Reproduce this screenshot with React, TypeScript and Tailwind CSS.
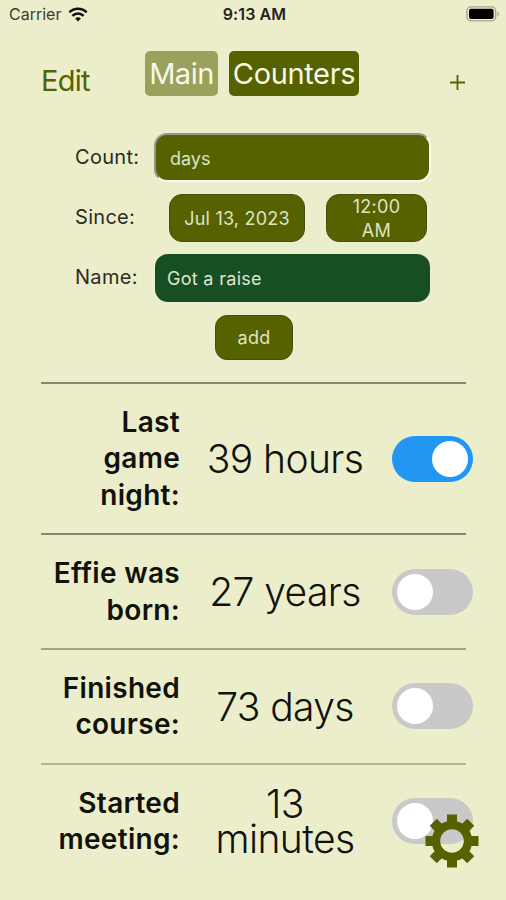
import { useState } from 'react';

interface Counter {
  id: number;
  label: string;
  value: string;
  on: boolean;
  line: string;
}

const COUNTERS: Counter[] = [
  { id: 1, label: 'Last game night:', value: '39 hours', on: true, line: 'border-[#85886a]' },
  { id: 2, label: 'Effie was born:', value: '27 years', on: false, line: 'border-[#85886a]' },
  { id: 3, label: 'Finished course:', value: '73 days', on: false, line: 'border-[#a3a582]' },
  { id: 4, label: 'Started meeting:', value: '13 minutes', on: false, line: 'border-[#b3b58f]' },
];

function StatusBar() {
  return (
    <div className="h-7 grid grid-cols-3 items-center pl-[9px] pr-[6px] text-black">
      <div className="flex items-center gap-[7px]">
        <span className="text-[16px] leading-7 text-[#3c3d35]">Carrier</span>
        <svg width="20" height="15" viewBox="0 0 20 15">
          <path d="M10 14.6 7.1 11.6a4.1 4.1 0 0 1 5.8 0Z" fill="#111" />
          <path d="M4.4 8.9a8 8 0 0 1 11.2 0M1.3 5.4a12.4 12.4 0 0 1 17.4 0" fill="none" stroke="#111" strokeWidth="2.5" />
        </svg>
      </div>
      <span className="text-center text-[16px] leading-7 font-semibold tracking-[0.1px] text-[#22231c]">9:13 AM</span>
      <svg className="justify-self-end" width="34" height="16" viewBox="0 0 34 16">
        <rect x="1" y="0.9" width="28.6" height="14" rx="4" fill="none" stroke="#a6a78f" strokeWidth="1.4" />
        <rect x="3" y="2.8" width="24.6" height="10.2" rx="2" fill="#000" />
        <path d="M31.5 5.4c1.8.6 1.8 4.4 0 5Z" fill="#a6a78f" />
      </svg>
    </div>
  );
}

function Toggle({ on, onChange }: { on: boolean; onChange: () => void }) {
  return (
    <button
      type="button"
      role="switch"
      aria-checked={on}
      onClick={onChange}
      className={`w-[81px] h-[46px] rounded-full px-[5px] flex items-center ${on ? 'bg-[#2196f3] justify-end' : 'bg-[#cac9ca] justify-start'}`}
    >
      <span className="w-9 h-9 rounded-full bg-white" />
    </button>
  );
}

function Gear() {
  return (
    <svg width="54" height="54" viewBox="-27 -27 54 54">
      <circle r="16" fill="none" stroke="#566200" strokeWidth="8.4" />
      <g fill="#566200">
        {[0, 45, 90, 135, 180, 225, 270, 315].map(a => (
          <rect key={a} x="-5" y="-26.5" width="10" height="9" transform={`rotate(${a})`} />
        ))}
      </g>
    </svg>
  );
}

export default function App() {
  const [counters, setCounters] = useState(COUNTERS);
  const [name, setName] = useState('Got a raise');

  const toggle = (id: number) =>
    setCounters(cs => cs.map(c => (c.id === id ? { ...c, on: !c.on } : c)));

  return (
    <div className="relative w-[506px] h-[900px] overflow-hidden bg-[#eceecb] font-['Inter',sans-serif] text-[#11120c]">
      <StatusBar />

      <header className="flex items-start h-[72px] pt-[23px] pl-[41px] pr-[40px]">
        <button className="w-[104px] mt-[11px] text-left text-[29px] leading-[38px] tracking-[-0.7px] text-[#566200]">Edit</button>
        <div className="flex gap-[11px]">
          <button className="w-[73px] h-[45px] rounded-[5px] bg-[#99a15c] text-[29px] leading-[45px] tracking-[-0.5px] text-[#f7f8e8]">Main</button>
          <button className="w-[130px] h-[45px] rounded-[5px] bg-[#566200] text-[29px] leading-[45px] tracking-[-0.35px] text-[#f7f8e8] whitespace-nowrap">Counters</button>
        </div>
        <button className="ml-auto mt-[23px]" aria-label="Add">
          <svg width="17" height="17" viewBox="0 0 17 17">
            <path d="M8.5 1v15M1 8.5h15" stroke="#566200" strokeWidth="1.8" />
          </svg>
        </button>
      </header>

      <form className="pt-[33px] pl-[75px] text-[20px] tracking-[0.3px] text-[#2a2b22]" onSubmit={e => e.preventDefault()}>
        <div className="flex items-center h-[49px]">
          <label className="w-[79px] leading-6 pb-[2px]">Count:</label>
          <div className="w-[277px] h-[49px] rounded-[13px] border-[2.5px] border-t-[#96978c] border-l-[#96978c] border-b-[#fbfbf3] border-r-[#fbfbf3] bg-[#566200] pl-[14px] pt-[1px] leading-[46px] text-[18px] tracking-normal text-[#dfe2c4]">days</div>
        </div>
        <div className="flex items-center h-12 mt-[12px]">
          <label className="w-[94px] leading-6 pb-[3px]">Since:</label>
          <button type="button" className="w-[136px] h-12 rounded-[13px] border border-[#454f0c] bg-[#566200] text-[18px] text-[#dfe2c4] tracking-[0.2px]">Jul 13, 2023</button>
          <button type="button" className="ml-[21px] w-[101px] h-12 rounded-[13px] border border-[#454f0c] bg-[#566200] px-5 text-[18px] leading-6 text-[#dfe2c4]">12:00 AM</button>
        </div>
        <div className="flex items-center h-12 mt-[12px]">
          <label className="w-[80px] leading-6 pb-[2px]">Name:</label>
          <input
            value={name}
            onChange={e => setName(e.target.value)}
            className="w-[275px] h-12 rounded-[13px] bg-[#174f22] px-[12px] text-[18px] text-[#dfe5d2] outline-none"
          />
        </div>
        <button className="block ml-[140px] mt-[13px] w-[78px] h-[45px] rounded-[12px] border border-[#454f0c] bg-[#566200] text-[18px] text-[#dfe2c4]">add</button>
      </form>

      <ul className="mt-[22px] pl-[41px]">
        {counters.map(c => (
          <li key={c.id} className={`w-[425px] border-t-2 ${c.line} py-5 flex items-center`}>
            <div className="w-[139px] shrink-0 text-right text-[28px] leading-[36.4px] font-semibold tracking-[0.3px]">
              {c.label}
            </div>
            <div className="w-[212px] shrink-0 pl-[18px] pr-[20px] text-center text-[39px] leading-[35px] font-light tracking-[-0.6px]">
              {c.value}
            </div>
            <div className="shrink-0">
              <Toggle on={c.on} onChange={() => toggle(c.id)} />
            </div>
          </li>
        ))}
      </ul>

      <button className="absolute left-[425px] top-[814px]" aria-label="Settings">
        <Gear />
      </button>
    </div>
  );
}
